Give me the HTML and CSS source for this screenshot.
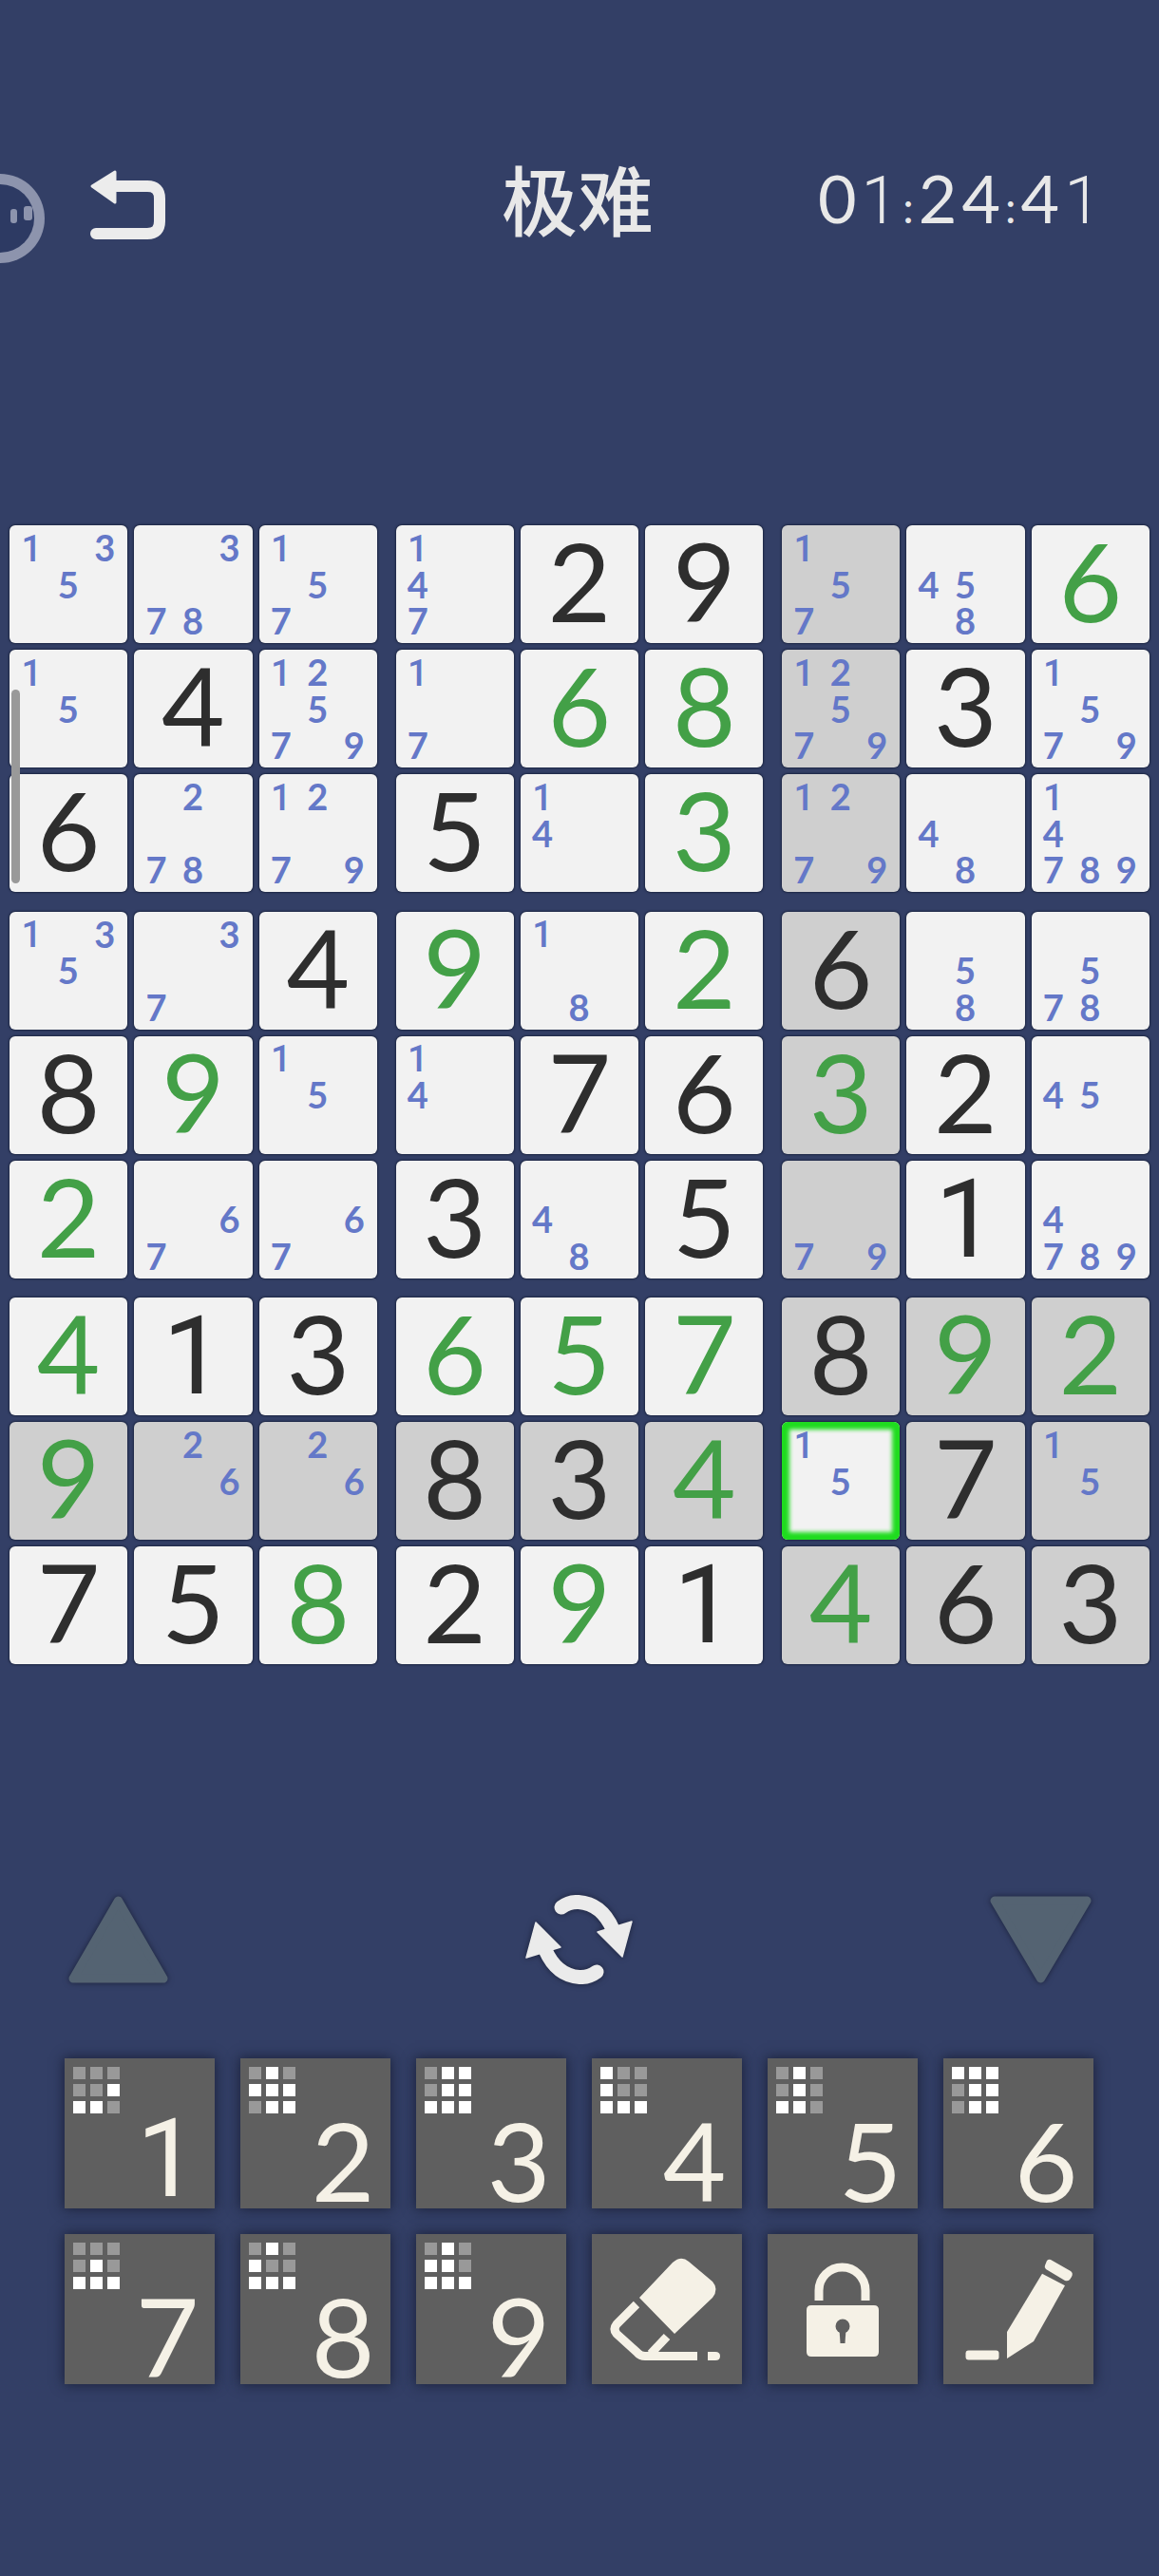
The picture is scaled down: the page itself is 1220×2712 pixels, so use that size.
FILE: index.html
```html
<!DOCTYPE html>
<html lang="zh">
<head>
  <meta charset="UTF-8">
  <meta name="viewport" content="width=device-width, initial-scale=1.0">
  <title>数独</title>
  <link rel="stylesheet" href="styles.css">
</head>
<body>
  <!-- floating assistant ball, half off screen -->
  <svg class="float-ball" width="48" height="96" viewBox="0 0 48 96">
    <circle cx="0" cy="48" r="47" fill="#8d94ad"/>
    <circle cx="0" cy="48" r="36" fill="#2d3a63"/>
    <rect x="11" y="38" width="7" height="15" rx="3" fill="#8d94ad"/>
    <rect x="25" y="35" width="9" height="15" rx="3" fill="#8d94ad"/>
  </svg>
  <div class="scroll-thumb"></div>

  <header class="top-bar">
    <svg class="back-icon" width="80" height="74" viewBox="0 0 80 74">
      <path d="M2 17 L26 2 V34 Z" fill="#ececec" stroke="#ececec" stroke-width="3" stroke-linejoin="round"/>
      <path d="M24 17 H60 Q73 17 73 30 V54 Q73 67 60 67 H6" fill="none" stroke="#ececec" stroke-width="12" stroke-linecap="round"/>
    </svg>
    <div class="level">极难</div>
    <div class="timer">0<span class="one">1</span><span class="sep">:</span>24<span class="sep">:</span>4<span class="one">1</span></div>
  </header>

  <main class="board">
    <div class="box">
      <div class="cell"><div class="notes"><span class="n1">1</span><span class="n3">3</span><span class="n5">5</span></div></div>
      <div class="cell"><div class="notes"><span class="n3">3</span><span class="n7">7</span><span class="n8">8</span></div></div>
      <div class="cell"><div class="notes"><span class="n1">1</span><span class="n5">5</span><span class="n7">7</span></div></div>
      <div class="cell"><div class="notes"><span class="n1">1</span><span class="n5">5</span></div></div>
      <div class="cell">4</div>
      <div class="cell"><div class="notes"><span class="n1">1</span><span class="n2">2</span><span class="n5">5</span><span class="n7">7</span><span class="n9">9</span></div></div>
      <div class="cell">6</div>
      <div class="cell"><div class="notes"><span class="n2">2</span><span class="n7">7</span><span class="n8">8</span></div></div>
      <div class="cell"><div class="notes"><span class="n1">1</span><span class="n2">2</span><span class="n7">7</span><span class="n9">9</span></div></div>
    </div>
    <div class="box">
      <div class="cell"><div class="notes"><span class="n1">1</span><span class="n4">4</span><span class="n7">7</span></div></div>
      <div class="cell">2</div>
      <div class="cell">9</div>
      <div class="cell"><div class="notes"><span class="n1">1</span><span class="n7">7</span></div></div>
      <div class="cell green">6</div>
      <div class="cell green">8</div>
      <div class="cell">5</div>
      <div class="cell"><div class="notes"><span class="n1">1</span><span class="n4">4</span></div></div>
      <div class="cell green">3</div>
    </div>
    <div class="box">
      <div class="cell shade"><div class="notes"><span class="n1">1</span><span class="n5">5</span><span class="n7">7</span></div></div>
      <div class="cell"><div class="notes"><span class="n4">4</span><span class="n5">5</span><span class="n8">8</span></div></div>
      <div class="cell green">6</div>
      <div class="cell shade"><div class="notes"><span class="n1">1</span><span class="n2">2</span><span class="n5">5</span><span class="n7">7</span><span class="n9">9</span></div></div>
      <div class="cell">3</div>
      <div class="cell"><div class="notes"><span class="n1">1</span><span class="n5">5</span><span class="n7">7</span><span class="n9">9</span></div></div>
      <div class="cell shade"><div class="notes"><span class="n1">1</span><span class="n2">2</span><span class="n7">7</span><span class="n9">9</span></div></div>
      <div class="cell"><div class="notes"><span class="n4">4</span><span class="n8">8</span></div></div>
      <div class="cell"><div class="notes"><span class="n1">1</span><span class="n4">4</span><span class="n7">7</span><span class="n8">8</span><span class="n9">9</span></div></div>
    </div>

    <div class="box">
      <div class="cell"><div class="notes"><span class="n1">1</span><span class="n3">3</span><span class="n5">5</span></div></div>
      <div class="cell"><div class="notes"><span class="n3">3</span><span class="n7">7</span></div></div>
      <div class="cell">4</div>
      <div class="cell">8</div>
      <div class="cell green">9</div>
      <div class="cell"><div class="notes"><span class="n1">1</span><span class="n5">5</span></div></div>
      <div class="cell green">2</div>
      <div class="cell"><div class="notes"><span class="n6">6</span><span class="n7">7</span></div></div>
      <div class="cell"><div class="notes"><span class="n6">6</span><span class="n7">7</span></div></div>
    </div>
    <div class="box">
      <div class="cell green">9</div>
      <div class="cell"><div class="notes"><span class="n1">1</span><span class="n8">8</span></div></div>
      <div class="cell green">2</div>
      <div class="cell"><div class="notes"><span class="n1">1</span><span class="n4">4</span></div></div>
      <div class="cell">7</div>
      <div class="cell">6</div>
      <div class="cell">3</div>
      <div class="cell"><div class="notes"><span class="n4">4</span><span class="n8">8</span></div></div>
      <div class="cell">5</div>
    </div>
    <div class="box">
      <div class="cell shade">6</div>
      <div class="cell"><div class="notes"><span class="n5">5</span><span class="n8">8</span></div></div>
      <div class="cell"><div class="notes"><span class="n5">5</span><span class="n7">7</span><span class="n8">8</span></div></div>
      <div class="cell shade green">3</div>
      <div class="cell">2</div>
      <div class="cell"><div class="notes"><span class="n4">4</span><span class="n5">5</span></div></div>
      <div class="cell shade"><div class="notes"><span class="n7">7</span><span class="n9">9</span></div></div>
      <div class="cell one">1</div>
      <div class="cell"><div class="notes"><span class="n4">4</span><span class="n7">7</span><span class="n8">8</span><span class="n9">9</span></div></div>
    </div>

    <div class="box">
      <div class="cell green">4</div>
      <div class="cell one">1</div>
      <div class="cell">3</div>
      <div class="cell shade green">9</div>
      <div class="cell shade"><div class="notes"><span class="n2">2</span><span class="n6">6</span></div></div>
      <div class="cell shade"><div class="notes"><span class="n2">2</span><span class="n6">6</span></div></div>
      <div class="cell">7</div>
      <div class="cell">5</div>
      <div class="cell green">8</div>
    </div>
    <div class="box">
      <div class="cell green">6</div>
      <div class="cell green">5</div>
      <div class="cell green">7</div>
      <div class="cell shade">8</div>
      <div class="cell shade">3</div>
      <div class="cell shade green">4</div>
      <div class="cell">2</div>
      <div class="cell green">9</div>
      <div class="cell one">1</div>
    </div>
    <div class="box">
      <div class="cell shade">8</div>
      <div class="cell shade green">9</div>
      <div class="cell shade green">2</div>
      <div class="cell selected"><div class="notes"><span class="n1">1</span><span class="n5">5</span></div></div>
      <div class="cell shade">7</div>
      <div class="cell shade"><div class="notes"><span class="n1">1</span><span class="n5">5</span></div></div>
      <div class="cell shade green">4</div>
      <div class="cell shade">6</div>
      <div class="cell shade">3</div>
    </div>
  </main>

  <section class="controls">
    <svg class="tri" width="105" height="92" viewBox="0 0 105 92">
      <path d="M52.5 5 L100 87 H5 Z"/>
    </svg>
    <svg class="refresh" width="113" height="94" viewBox="0 0 113 94">
      <g>
        <path d="M38 13 Q46 7 56 7.5 Q80 9 92 36" fill="none" stroke="#ebebeb" stroke-width="15" stroke-linecap="round"/>
        <path d="M76 39 L112 28 L102 65 Z" fill="#ebebeb" stroke="#ebebeb" stroke-width="1.5" stroke-linejoin="round"/>
      </g>
      <g transform="rotate(180 56.5 47)">
        <path d="M38 13 Q46 7 56 7.5 Q80 9 92 36" fill="none" stroke="#ebebeb" stroke-width="15" stroke-linecap="round"/>
        <path d="M76 39 L112 28 L102 65 Z" fill="#ebebeb" stroke="#ebebeb" stroke-width="1.5" stroke-linejoin="round"/>
      </g>
    </svg>
    <svg class="tri" width="107" height="92" viewBox="0 0 107 92">
      <path d="M5 5 H102 L53.5 87 Z"/>
    </svg>
  </section>

  <section class="keypad">
    <button class="key">
      <span class="mini"><i></i><i></i><i></i><i></i><i></i><i class="on"></i><i class="on"></i><i class="on"></i><i></i></span>
      <span class="key-num one">1</span>
    </button>
    <button class="key">
      <span class="mini"><i></i><i class="on"></i><i></i><i class="on"></i><i class="on"></i><i class="on"></i><i></i><i class="on"></i><i class="on"></i></span>
      <span class="key-num">2</span>
    </button>
    <button class="key">
      <span class="mini"><i></i><i class="on"></i><i class="on"></i><i></i><i class="on"></i><i class="on"></i><i class="on"></i><i class="on"></i><i class="on"></i></span>
      <span class="key-num">3</span>
    </button>
    <button class="key">
      <span class="mini"><i class="on"></i><i></i><i></i><i class="on"></i><i></i><i></i><i class="on"></i><i class="on"></i><i class="on"></i></span>
      <span class="key-num">4</span>
    </button>
    <button class="key">
      <span class="mini"><i></i><i class="on"></i><i></i><i></i><i class="on"></i><i></i><i class="on"></i><i class="on"></i><i></i></span>
      <span class="key-num">5</span>
    </button>
    <button class="key">
      <span class="mini"><i class="on"></i><i class="on"></i><i class="on"></i><i></i><i class="on"></i><i class="on"></i><i></i><i class="on"></i><i class="on"></i></span>
      <span class="key-num">6</span>
    </button>
    <button class="key">
      <span class="mini"><i></i><i></i><i></i><i></i><i class="on"></i><i></i><i class="on"></i><i class="on"></i><i class="on"></i></span>
      <span class="key-num">7</span>
    </button>
    <button class="key">
      <span class="mini"><i></i><i class="on"></i><i></i><i class="on"></i><i></i><i></i><i class="on"></i><i class="on"></i><i class="on"></i></span>
      <span class="key-num">8</span>
    </button>
    <button class="key">
      <span class="mini"><i></i><i class="on"></i><i></i><i class="on"></i><i class="on"></i><i></i><i class="on"></i><i class="on"></i><i class="on"></i></span>
      <span class="key-num">9</span>
    </button>
    <button class="key key-icon">
      <svg width="158" height="158" viewBox="0 0 158 158">
        <path d="M50 67 L85 30 Q94 22 102 29 L127 50 Q134 58 127 67 L87 105 Z"/>
        <path class="line" d="M47 74 L26 95 Q22 100 26 105 L48 125 Q51 128.5 56 128.5 H111"/>
        <path class="line" d="M79 108 L62 126"/>
        <path d="M122 124 H130 Q135 124 135 128.5 Q135 133 130 133 H122 Z"/>
      </svg>
    </button>
    <button class="key key-icon">
      <svg width="158" height="158" viewBox="0 0 158 158">
        <path class="line" d="M54 70 V59.5 a24.5 24.5 0 0 1 49 0 V70"/>
        <path d="M46 75 H112 Q117 75 117 80 V124 Q117 129 112 129 H46 Q41 129 41 124 V80 Q41 75 46 75 Z"/>
        <circle class="hole" cx="79" cy="97" r="7.5"/>
        <path class="hole" d="M75.5 100 H82.5 L81.5 115 H76.5 Z"/>
      </svg>
    </button>
    <button class="key key-icon">
      <svg width="158" height="158" viewBox="0 0 158 158">
        <path d="M113 27 L134 39 Q137 41 135 45 L133 48 Q131 50 128 49 L108 37 Q106 35 107 33 L109 28 Q111 26 113 27 Z"/>
        <path d="M104 41.7 L128 54.3 L95 113 L67 131 V103 Z"/>
        <rect x="23.5" y="122.5" width="35" height="10" rx="3"/>
      </svg>
    </button>
  </section>
</body>
</html>
```

FILE: styles.css
```css
* {
  margin: 0;
  padding: 0;
  box-sizing: border-box;
}

body {
  position: relative;
  width: 1220px;
  height: 2712px;
  overflow: hidden;
  background-color: #333f66;
  font-family: "Lato", "Noto Sans CJK SC", sans-serif;
}

.float-ball {
  position: absolute;
  left: 0;
  top: 182px;
}

.scroll-thumb {
  position: absolute;
  left: 12px;
  top: 726px;
  width: 9px;
  height: 204px;
  border-radius: 5px;
  background-color: #999;
}

.top-bar {
  display: grid;
  grid-template-columns: 1fr auto 1fr;
  grid-template-rows: 74px;
  align-items: center;
  height: 74px;
  margin-top: 179px;
  padding: 0 64px 0 60px;
}

.back-icon {
  margin-left: 35px;
}

.level {
  margin-bottom: 18px;
  font-family: "Noto Sans CJK SC", sans-serif;
  font-size: 80px;
  font-weight: 500;
  line-height: 74px;
  color: #e8e8e8;
}

.timer {
  justify-self: end;
  margin-right: -8px;
  margin-bottom: 7px;
  font-size: 70px;
  font-weight: 400;
  letter-spacing: 5px;
  line-height: 74px;
  color: #e8e8e8;
}

.timer .one {
  font-family: "Roboto", sans-serif;
  font-weight: 300;
}

.timer .sep {
  font-size: 46px;
}

.board {
  display: grid;
  grid-template-columns: repeat(3, 387px);
  column-gap: 19.5px;
  row-gap: 20.5px;
  margin-top: 300px;
  padding-left: 10px;
}

.box {
  display: grid;
  grid-template-columns: repeat(3, 124.3px);
  grid-auto-rows: 124px;
  gap: 7px;
}

.cell {
  display: flex;
  align-items: flex-start;
  justify-content: center;
  border-radius: 6px;
  background-color: #f2f2f2;
  box-shadow: 0 0 2px 1px #1d2743;
  font-size: 115px;
  line-height: 114px;
  color: #2e2e2e;
}

.cell.one {
  padding-top: 5px;
  font-family: "Roboto", sans-serif;
  font-weight: 400;
}

.shade {
  background-color: #cfcfcf;
}

.green {
  color: #43a047;
}

.selected {
  background-color: #f2f2f2;
  box-shadow: 0 0 2px 1px #1d2743, inset 0 0 4px 8px #1fdc1f;
}

.notes {
  display: grid;
  grid-template-columns: repeat(3, 38.5px);
  grid-template-rows: repeat(3, 38.5px);
  width: 100%;
  height: 124px;
  padding: 4px;
  font-size: 38px;
  font-weight: 700;
  line-height: 1;
  color: #6478c8;
}

.notes span {
  display: flex;
  align-items: center;
  justify-content: center;
}

.n1 {
  grid-area: 1 / 1;
  padding-top: 3px;
  font-family: "Roboto", sans-serif;
  font-weight: 500;
}
.n2 { grid-area: 1 / 2; }
.n3 { grid-area: 1 / 3; }
.n4 { grid-area: 2 / 1; }
.n5 { grid-area: 2 / 2; }
.n6 { grid-area: 2 / 3; }
.n7 { grid-area: 3 / 1; }
.n8 { grid-area: 3 / 2; }
.n9 { grid-area: 3 / 3; }

.controls {
  display: flex;
  justify-content: space-between;
  align-items: center;
  margin-top: 243px;
  padding: 0 71px 0 72px;
}

.tri {
  overflow: visible;
  fill: #546372;
  stroke: #546372;
  stroke-width: 9;
  stroke-linejoin: round;
  filter: drop-shadow(0 0 3px rgba(20, 25, 45, 0.8));
}

.refresh {
  filter: drop-shadow(0 0 3px rgba(20, 25, 45, 0.8));
}

.keypad {
  display: grid;
  grid-template-columns: repeat(6, 158px);
  grid-auto-rows: 158px;
  gap: 27px;
  margin-top: 78px;
  padding-left: 68px;
}

.key {
  display: flex;
  flex-direction: column;
  justify-content: space-between;
  padding: 9px;
  border: none;
  background-color: #5f5f5f;
  box-shadow: 0 0 12px 1px rgba(20, 25, 45, 0.75);
  font-family: inherit;
  text-align: left;
}

.mini {
  display: grid;
  grid-template-columns: repeat(3, 13px);
  grid-auto-rows: 13px;
  gap: 5px;
}

.mini i {
  background-color: #999;
}

.mini i.on {
  background-color: #fff;
}

.key-num {
  align-self: flex-end;
  width: 70px;
  margin-right: 6px;
  font-size: 115px;
  font-weight: 400;
  line-height: 96px;
  text-align: center;
  color: #f5f1e6;
}

.key-num.one {
  font-family: "Roboto", sans-serif;
  line-height: 86px;
}

.key-icon {
  padding: 0;
}

.key-icon svg {
  fill: #f5f1e6;
}

.key-icon .line {
  fill: none;
  stroke: #f5f1e6;
  stroke-width: 9;
}

.key-icon .hole {
  fill: #5f5f5f;
}
```
